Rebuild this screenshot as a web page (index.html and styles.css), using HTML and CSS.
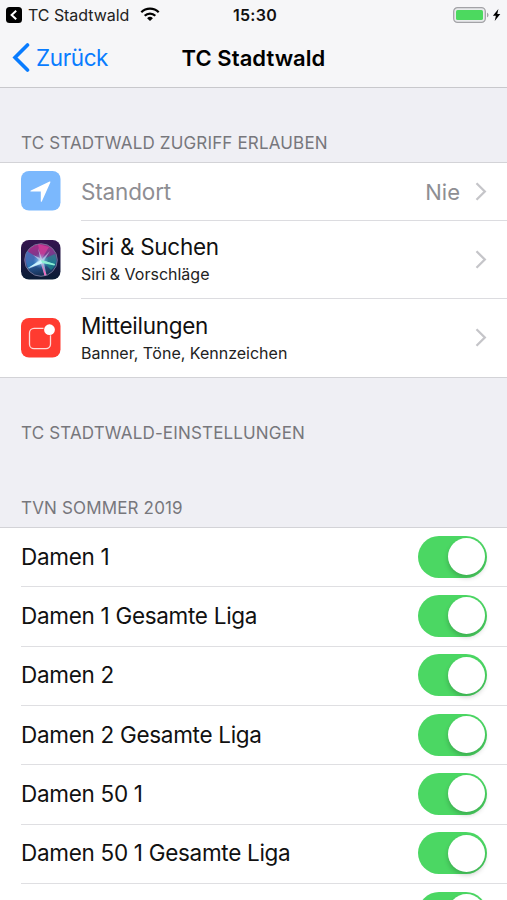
FILE: index.html
```html
<!DOCTYPE html>
<html lang="de">
<head>
<meta charset="utf-8">
<title>TC Stadtwald</title>
<link rel="stylesheet" href="styles.css">
</head>
<body>
<header class="top">
  <div class="status">
    <div class="status-left">
      <svg class="return" width="16" height="16" viewBox="0 0 16 16"><rect width="16" height="16" rx="3.5" fill="#000"/><path d="M10.200 3.700 5.600 8l4.600 4.300" fill="none" stroke="#fff" stroke-width="2"/></svg>
      <span class="status-app">TC Stadtwald</span>
      <svg class="wifi" width="20" height="15" viewBox="0 0 20 15"><g fill="none" stroke="#000" stroke-width="2.3"><path d="M1.3 5.2a12.3 12.3 0 0 1 17.4 0"/><path d="M4.7 8.8a7.5 7.5 0 0 1 10.6 0"/></g><path d="M7.1 11.2a4.2 4.2 0 0 1 5.8 0L10 14.1z"/></svg>
    </div>
    <span class="status-time">15:30</span>
    <svg class="battery" width="48" height="18" viewBox="0 0 48 18"><rect x=".7" y="1.7" width="31.6" height="14.6" rx="3.8" fill="#e9eaec" stroke="#a3a3a7" stroke-width="1.3"/><rect x="3" y="4" width="27" height="10" rx="1.6" fill="#4cd95f"/><path d="M34 6.7c2 .7 2 3.900 0 4.600z" fill="#a3a3a7"/><path d="M45.400 3 39.900 9.700h3l-1.200 5.300 5.600-7h-3z"/></svg>
  </div>
  <nav class="nav">
    <a class="back"><svg width="18" height="29" viewBox="0 0 18 29"><path d="M15.500 2 3 14.500 15.500 27" fill="none" stroke="#087cff" stroke-width="3.600" stroke-linecap="round" stroke-linejoin="miter"/></svg><span>Zurück</span></a>
    <h1 class="title">TC Stadtwald</h1>
  </nav>
</header>
<main>
  <h2 class="heading first">TC STADTWALD ZUGRIFF ERLAUBEN</h2>
  <section class="group">
    <div class="app-row short">
      <svg class="icon" width="40" height="40" viewBox="0 0 40 40"><rect width="39.500" height="39.500" rx="8" fill="#7bb8fd"/><path d="M28.600 10.600c.6-.2 1 .2.700.8l-8.500 19c-.3.700-1 .5-1-.2V20.500h-9.700c-.8 0-.9-.8-.2-1.100z" fill="#fff"/></svg>
      <div class="content muted">
        <span class="label">Standort</span>
        <span class="value">Nie</span>
        <svg class="chevron" width="12" height="19" viewBox="0 0 12 19"><path d="m1.500 1.300 8.300 8.200-8.300 8.200" fill="none" stroke="#c5c5c9" stroke-width="2.300"/></svg>
      </div>
    </div>
    <div class="app-row">
      <svg class="icon" width="40" height="40" viewBox="0 0 40 40">
        <defs>
          <linearGradient id="dark" x2="0" y2="1"><stop stop-color="#35154f"/><stop offset="1" stop-color="#091c36"/></linearGradient>
          <linearGradient id="orb" x1=".4" x2=".6" y2="1"><stop stop-color="#a82a86"/><stop offset=".4" stop-color="#743c8d"/><stop offset=".65" stop-color="#27548e"/><stop offset="1" stop-color="#122a4b"/></linearGradient>
          <radialGradient id="glow"><stop stop-color="#fff"/><stop offset=".35" stop-color="#a9eaff" stop-opacity=".7"/><stop offset="1" stop-color="#6da5ff" stop-opacity="0"/></radialGradient>
        </defs>
        <rect width="39.500" height="39.500" rx="8" fill="url(#dark)"/>
        <circle cx="20" cy="20" r="16.300" fill="url(#orb)" stroke="#77779a" stroke-width=".9"/>
        <path d="M20 20 6 11c-3 8-1 13 2 18z" fill="#258ed0" opacity=".6"/>
        <path d="m20 20 14-6c3 7 0 13-4 16z" fill="#179d91" opacity=".55"/>
        <path d="M20 20 17 4l11 3z" fill="#e83f9d" opacity=".6"/>
        <circle cx="20" cy="21" r="8" fill="url(#glow)" opacity=".7"/>
        <path d="M17 8 21 19 29 11 23 20.500 34 24.500 23 23 25.500 35 23.500 35.500 20 24 7 29 18 20 12 15 19 18z" fill="#c8d9f5" opacity=".65"/>
        <path d="m20.500 23 5 12-2 .500z" fill="#f06abf"/>
        <path d="m6 28.500 14-8.500 2 3z" fill="#c9f4ff"/>
        <path d="m20 20 14 4-.5 1.500L21 23z" fill="#8af0d4"/>
      </svg>
      <div class="content">
        <div class="text"><span class="label">Siri &amp; Suchen</span><span class="sub">Siri &amp; Vorschläge</span></div>
        <svg class="chevron" width="12" height="19" viewBox="0 0 12 19"><path d="m1.500 1.300 8.300 8.200-8.300 8.200" fill="none" stroke="#c5c5c9" stroke-width="2.300"/></svg>
      </div>
    </div>
    <div class="app-row">
      <svg class="icon" width="40" height="40" viewBox="0 0 40 40"><rect width="39.500" height="39.500" rx="8" fill="#ff3b30"/><path d="M22.500 10.300H13a4.500 4.500 0 0 0-4.500 4.500v11.400a4.500 4.500 0 0 0 4.500 4.500h12a4.500 4.500 0 0 0 4.500-4.500v-9" fill="none" stroke="#ffd8d5" stroke-width="1.300"/><circle cx="28.500" cy="11.700" r="5.400" fill="#fff"/></svg>
      <div class="content last">
        <div class="text"><span class="label">Mitteilungen</span><span class="sub">Banner, Töne, Kennzeichen</span></div>
        <svg class="chevron" width="12" height="19" viewBox="0 0 12 19"><path d="m1.500 1.300 8.300 8.200-8.300 8.200" fill="none" stroke="#c5c5c9" stroke-width="2.300"/></svg>
      </div>
    </div>
  </section>
  <h2 class="heading second">TC STADTWALD-EINSTELLUNGEN</h2>
  <h2 class="heading third">TVN SOMMER 2019</h2>
  <section class="group teams">
    <div class="team"><span class="label">Damen 1</span><i class="switch"></i></div>
    <div class="team"><span class="label">Damen 1 Gesamte Liga</span><i class="switch"></i></div>
    <div class="team"><span class="label">Damen 2</span><i class="switch"></i></div>
    <div class="team"><span class="label">Damen 2 Gesamte Liga</span><i class="switch"></i></div>
    <div class="team"><span class="label">Damen 50 1</span><i class="switch"></i></div>
    <div class="team"><span class="label">Damen 50 1 Gesamte Liga</span><i class="switch"></i></div>
    <div class="team"><i class="switch"></i></div>
  </section>
</main>
</body>
</html>
```
FILE: styles.css
```css
* { box-sizing: border-box; }
body {
  margin: 0;
  height: 900px;
  overflow: hidden;
  background: #efeff4;
  color: #111;
  font-family: Inter, "Liberation Sans", sans-serif;
}
svg { display: block; flex: none; }
.top { height: 88px; background: #f6f6f8; border-bottom: 1px solid #c8c8cc; }
.status {
  height: 30px;
  padding: 0 6px;
  display: grid;
  grid-template-columns: 1fr auto 1fr;
  align-items: center;
}
.status-left { display: flex; align-items: center; }
.status-app { margin-left: 6px; width: 101px; font-size: 16px; letter-spacing: -.05px; white-space: nowrap; color: #222; }
.wifi { margin-left: 11px; margin-top: -2px; }
.status-time { padding-left: 3px; font-size: 16px; font-weight: 600; letter-spacing: .3px; }
.battery { justify-self: end; }
.nav {
  height: 55px;
  padding: 0 12px;
  display: grid;
  grid-template-columns: 1fr auto 1fr;
  align-items: center;
}
.back { display: flex; align-items: center; gap: 6px; color: #087cff; font-size: 22.500px; letter-spacing: -.4px; }
.title { margin: 0; font-size: 22px; font-weight: 600; letter-spacing: .05px; color: #000; }
.heading {
  margin: 0;
  padding: 0 21px 8px;
  display: flex;
  align-items: flex-end;
  font-size: 17px;
  line-height: 22px;
  letter-spacing: .16px;
  font-weight: 400;
  color: #77777c;
}
.first { height: 74px; }
.second { height: 66px; padding-bottom: 0; }
.third { height: 83px; }
.group { background: #fff; border-top: 1px solid #d3d3d7; border-bottom: 1px solid #d3d3d7; }
.app-row { height: 78px; padding-left: 21px; display: flex; align-items: center; }
.app-row .icon { margin-top: -1px; }
.short { height: 58px; }
.short .icon { margin-top: -2px; }
.content {
  flex: 1;
  height: 100%;
  margin-left: 20px;
  padding-right: 20px;
  display: flex;
  align-items: center;
  border-bottom: 1px solid #dcdce0;
}
.last { border-bottom: 0; }
.text { display: flex; flex-direction: column; }
.label { font-size: 22.500px; line-height: 30px; letter-spacing: -.3px; white-space: nowrap; }
.text .label { line-height: 29px; }
.sub { font-size: 16px; line-height: 26px; color: #222; white-space: nowrap; }
.muted { color: #8e8e93; }
.muted .label { letter-spacing: -.15px; }
.value { margin-left: auto; font-size: 22px; }
.chevron { margin-left: auto; margin-top: -1px; }
.value + .chevron { margin-left: 15px; }
.teams { height: 373px; overflow: hidden; border-bottom: 0; }
.team {
  height: 59.330px;
  margin-left: 21px;
  padding: 0 20px 1px 0;
  display: flex;
  align-items: center;
  justify-content: space-between;
  border-bottom: 1px solid #dfdfe2;
}
.switch {
  width: 69px;
  height: 42px;
  margin-left: auto;
  padding: 2.500px;
  display: flex;
  justify-content: flex-end;
  border-radius: 21px;
  background: #4bd763;
}
.switch::after {
  content: "";
  width: 37px;
  height: 37px;
  border-radius: 50%;
  background: #fff;
  box-shadow: 0 3px 5px rgba(0, 0, 0, .2);
}
```
